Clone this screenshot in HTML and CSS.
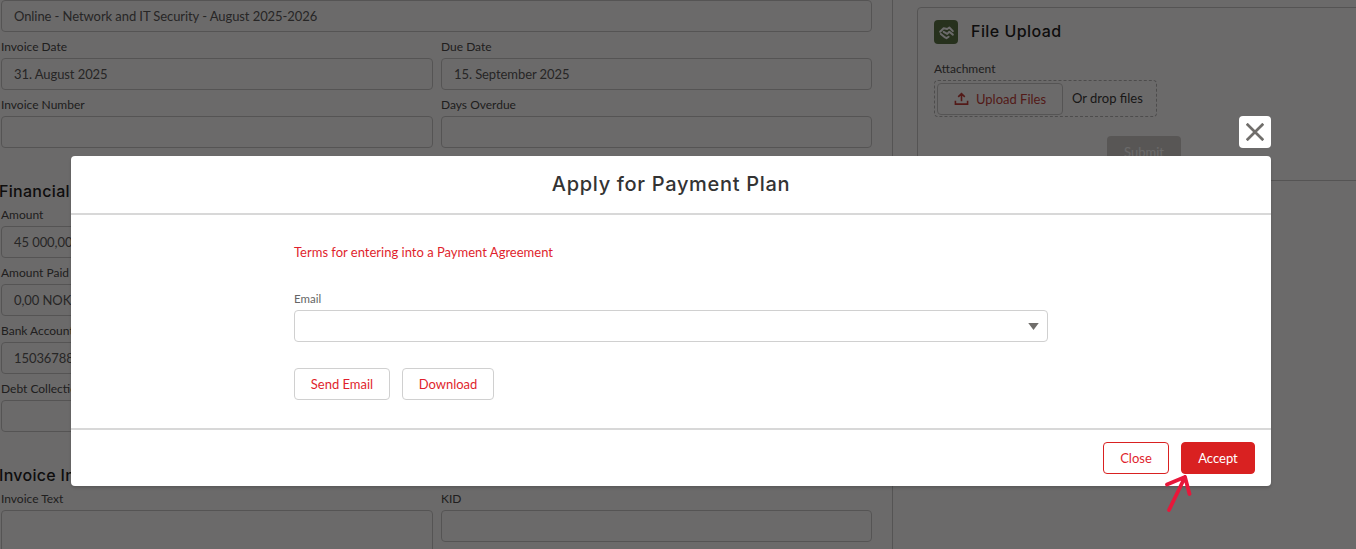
FILE: index.html
```html
<!DOCTYPE html>
<html lang="en">
<head>
<meta charset="utf-8">
<title>Apply for Payment Plan</title>
<link rel="stylesheet" href="styles.css">
</head>
<body>
<div class="page">
  <main class="form-col">
    <div class="grid">
      <div class="field wide"><div class="input">Online - Network and IT Security - August 2025-2026</div></div>
      <div class="field"><label class="label">Invoice Date</label><div class="input">31. August 2025</div></div>
      <div class="field"><label class="label">Due Date</label><div class="input">15. September 2025</div></div>
      <div class="field"><label class="label">Invoice Number</label><div class="input"></div></div>
      <div class="field"><label class="label">Days Overdue</label><div class="input"></div></div>
    </div>
    <h2 class="section-title">Financial Information</h2>
    <div class="grid">
      <div class="field"><label class="label">Amount</label><div class="input">45 000,00 NOK</div></div>
      <div class="field"></div>
      <div class="field"><label class="label">Amount Paid</label><div class="input">0,00 NOK</div></div>
      <div class="field"></div>
      <div class="field"><label class="label">Bank Account</label><div class="input">15036788</div></div>
      <div class="field"></div>
      <div class="field"><label class="label">Debt Collection</label><div class="input"></div></div>
      <div class="field"></div>
    </div>
    <h2 class="section-title">Invoice Information</h2>
    <div class="grid">
      <div class="field"><label class="label">Invoice Text</label><div class="input tall"></div></div>
      <div class="field"><label class="label">KID</label><div class="input"></div></div>
    </div>
  </main>
  <aside class="side-col">
    <section class="card">
      <header class="card-head">
        <span class="card-icon">
          <svg viewBox="0 0 24 24" width="17" height="17" fill="none" stroke="#fff" stroke-width="2.800" stroke-linecap="round" stroke-linejoin="round"><path d="M3 11l5-5 5 1 3-2 5 5"/><path d="M8 11l5 3 3-3 5 4"/><path d="M4 14l6 5 2 1 3-2"/></svg>
        </span>
        <h2 class="card-title">File Upload</h2>
      </header>
      <div class="label attach-label">Attachment</div>
      <div class="dropzone">
        <span class="upload-btn">
          <svg viewBox="0 0 16 16" width="15" height="15" fill="none" stroke="#c23934" stroke-width="1.7"><path d="M8 11V3M4.5 6.3L8 2.8l3.500 3.500M1.500 10.500v3.500h13v-3.500"/></svg>
          Upload Files
        </span>
        <span class="drop-text">Or drop files</span>
      </div>
      <div class="submit-row"><span class="submit-btn">Submit</span></div>
    </section>
  </aside>
</div>

<div class="backdrop"></div>

<div class="modal" role="dialog" aria-label="Apply for Payment Plan">
  <button class="modal-x" aria-label="Close">
    <svg viewBox="0 0 16 16" width="18" height="18" fill="none" stroke="#706e6b" stroke-width="2.400" stroke-linecap="square"><path d="M1.500 1.500l13 13M14.500 1.500l-13 13"/></svg>
  </button>
  <header class="modal-head"><h1 class="modal-title">Apply for Payment Plan</h1></header>
  <div class="modal-body">
    <a class="terms">Terms for entering into a Payment Agreement</a>
    <label class="label modal-label">Email</label>
    <div class="combo">
      <svg class="caret" viewBox="0 0 12 8" width="11" height="7"><path d="M0 0h12L6 8z" fill="#706e6b"/></svg>
    </div>
    <div class="actions">
      <button class="btn btn-send">Send Email</button>
      <button class="btn btn-download">Download</button>
    </div>
  </div>
  <footer class="modal-foot">
    <button class="btn btn-outline">Close</button>
    <button class="btn btn-solid">Accept</button>
  </footer>
</div>

<svg class="arrow" viewBox="0 0 30 40" width="30" height="40" fill="none" stroke="#e8173a" stroke-width="3.800" stroke-linecap="round" stroke-linejoin="round"><path d="M5 36L21 3M3 10.500L21 3l4.500 17"/></svg>
</body>
</html>
```
FILE: styles.css
```css
* { box-sizing: border-box; }
html, body { margin: 0; height: 549px; overflow: hidden; background: #fff; }
body { font-family: Lato, "Liberation Sans", sans-serif; color: #3e3e3c; position: relative; }

.page { display: flex; height: 549px; overflow: hidden; }
.form-col { width: 892px; height: 549px; overflow: hidden; flex: none; padding-left: 1px; }
.grid { display: grid; grid-template-columns: 432px 431px; column-gap: 8px; row-gap: 4px; }
.field { min-width: 0; }
.wide { grid-column: 1 / -1; }
.label { display: block; font-size: 12px; line-height: 22px; color: #444; }
.input {
  height: 32px; border: 1px solid #c9c9c9; border-radius: 4px;
  padding: 0 12px; font-size: 13px; letter-spacing: -.08px; line-height: 30px; color: #555; background: #fff0;
}
.tall { height: 80px; }
.section-title {
  margin: 31px 0 1px -2px; font-family: Inter, sans-serif; font-weight: 500;
  font-size: 16px; letter-spacing: .3px; line-height: 24px; color: #181818; white-space: nowrap;
}

.side-col { flex: 1; min-width: 0; border-left: 1px solid #c9c9c9; padding: 7px 0 0 24px; overflow: hidden; }
.card { height: 174px; margin-right: -4px; border: 1px solid #c9c9c9; border-radius: 4px; padding: 12px 16px; }
.card-head { display: flex; align-items: center; gap: 13px; height: 24px; }
.card-icon { width: 24px; height: 24px; border-radius: 4px; background: #567040; display: flex; align-items: center; justify-content: center; }
.card-title { margin: 0 0 2px; font-family: Inter, sans-serif; font-weight: 500; font-size: 16px; letter-spacing: .45px; line-height: 22px; color: #181818; }
.attach-label { margin-top: 14px; line-height: 22px; }
.dropzone {
  display: flex; align-items: center; gap: 9px; width: 223px; height: 37px;
  border: 1px dashed #b5b5b5; border-radius: 4px; padding: 0 2px;
  font-size: 13px;
}
.upload-btn {
  display: flex; align-items: center; justify-content: center; gap: 7px; width: 126px; height: 32px;
  border: 1px solid #c9c9c9; border-radius: 4px; color: #c23934;
}
.drop-text { color: #333; margin-bottom: 2px; }
.submit-row { display: flex; margin-top: 19px; padding-left: 173px; }
.submit-btn { width: 74px; height: 32px; border-radius: 4px; background: #d0cecb; color: #fff; font-size: 13px; line-height: 32px; text-align: center; }

.backdrop { position: absolute; inset: 0; background: rgba(8, 7, 7, .6); }

.modal {
  position: absolute; left: 71px; top: 156px; width: 1200px; height: 330px;
  background: #fff; border-radius: 4px; box-shadow: 0 2px 3px rgba(0, 0, 0, .16);
}
.modal-x {
  position: absolute; right: 0; top: -40px; width: 32px; height: 32px; padding: 0; border: 0;
  border-radius: 4px; background: #fff; display: flex; align-items: center; justify-content: center;
}
.modal-head { height: 59px; border-bottom: 2px solid #d8d8d8; display: flex; align-items: center; justify-content: center; }
.modal-title { margin: 0 0 2px; font-family: Inter, sans-serif; font-weight: 500; font-size: 20px; letter-spacing: .68px; line-height: 24px; color: #333; }
.modal-body { padding: 27px 223px 28px; }
.terms { display: block; font-size: 13px; line-height: 20px; color: #e01f2d; }
.modal-label { margin-top: 26px; color: #666; font-size: 11.500px; }
.combo { position: relative; height: 32px; border: 1px solid #d0d0d0; border-radius: 4px; }
.caret { position: absolute; right: 8px; top: 12px; }
.actions { display: flex; gap: 12px; margin-top: 26px; }
.btn {
  height: 32px; padding: 0; background: #fff; border: 1px solid #d0d0d0; border-radius: 4px;
  font-family: Lato, "Liberation Sans", sans-serif; font-size: 13px; color: #e01f2d;
}
.btn-send { width: 96px; }
.btn-download { width: 92px; }
.modal-foot { border-top: 2px solid #d8d8d8; padding: 12px 16px; display: flex; justify-content: flex-end; gap: 12px; }
.btn-outline { width: 66px; border-color: #d92121; }
.btn-solid { width: 74px; background: #d92121; border-color: #d92121; color: #fff; }

.arrow { position: absolute; left: 1164px; top: 474px; }
```
